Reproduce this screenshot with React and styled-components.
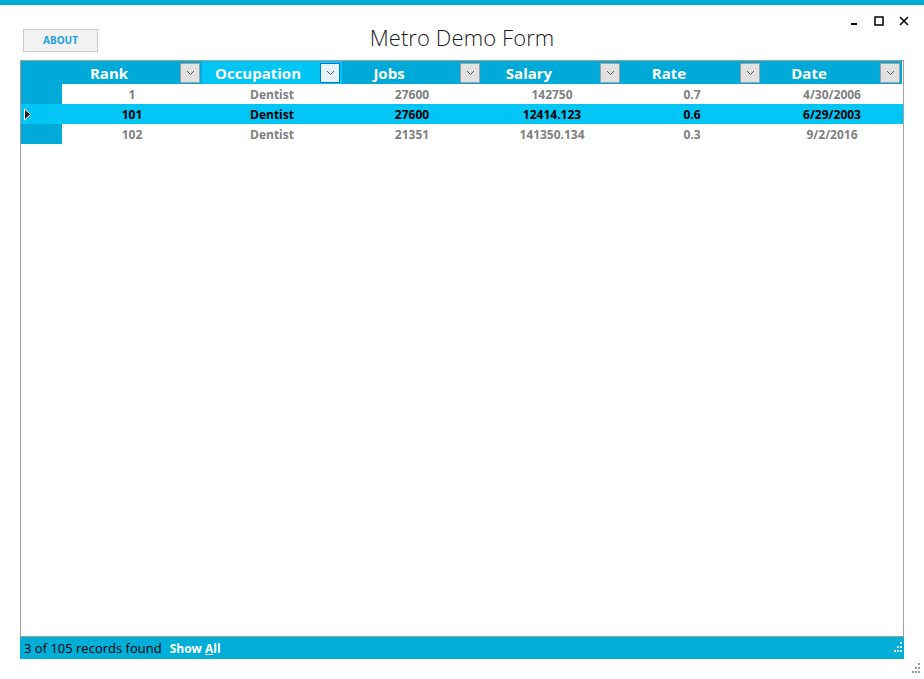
import React from "react";
import styled, { createGlobalStyle } from "styled-components";

const GlobalStyle = createGlobalStyle`
  html, body {
    margin: 0;
    padding: 0;
    background: #ffffff;
  }
  body {
    font-family: "Open Sans", "Noto Sans", sans-serif;
  }
`;

const columns = [
  { key: "rank", label: "Rank" },
  { key: "occupation", label: "Occupation", hover: true },
  { key: "jobs", label: "Jobs" },
  { key: "salary", label: "Salary" },
  { key: "rate", label: "Rate" },
  { key: "date", label: "Date" },
];

const rows = [
  { rank: "1", occupation: "Dentist", jobs: "27600", salary: "142750", rate: "0.7", date: "4/30/2006" },
  { rank: "101", occupation: "Dentist", jobs: "27600", salary: "12414.123", rate: "0.6", date: "6/29/2003", selected: true },
  { rank: "102", occupation: "Dentist", jobs: "21351", salary: "141350.134", rate: "0.3", date: "9/2/2016" },
];

const Page = styled.div`
  width: 924px;
  height: 679px;
  display: flex;
  flex-direction: column;
  overflow: hidden;
`;

const AccentBar = styled.div`
  height: 5px;
  background: #00aad8;
`;

const TitleBar = styled.div`
  height: 55px;
  display: grid;
  grid-template-columns: 1fr auto 1fr;
`;

const LeftSlot = styled.div`
  padding: 22px 0 0 23px;
`;

const AboutButton = styled.button`
  width: 75px;
  height: 23px;
  border: 1px solid #cccccc;
  background: #f2f2f2;
  color: #1ba1e2;
  font-family: "Open Sans", sans-serif;
  font-size: 10px;
  font-weight: 700;
  padding: 0;
  cursor: pointer;
`;

const Title = styled.h1`
  margin: 0;
  padding-top: 17px;
  font-family: "Open Sans", sans-serif;
  font-weight: 300;
  font-size: 22px;
  line-height: 30px;
  letter-spacing: 0.1px;
  color: #1a1a1a;
`;

const Controls = styled.div`
  display: flex;
  justify-content: flex-end;
  align-items: flex-start;
  gap: 9px;
  padding: 9px 12px 0 0;
`;

const ControlButton = styled.button`
  width: 16px;
  height: 14px;
  border: 0;
  padding: 0;
  background: transparent;
  display: flex;
  align-items: center;
  justify-content: center;
`;

const Panel = styled.div`
  margin-left: 20px;
  width: 884px;
  height: 599px;
  display: flex;
  flex-direction: column;
`;

const GridFrame = styled.div`
  flex: 1;
  border: 1px solid #a0a0a0;
  background: #ffffff;
  display: flex;
  flex-direction: column;
`;

const GridRow = styled.div`
  display: grid;
  grid-template-columns: 41px repeat(6, 140px);
  height: ${(p) => (p.$header ? 23 : 20)}px;
  background: ${(p) => (p.$selected ? "#00c5f5" : "transparent")};
`;

const RowHeader = styled.div`
  background: ${(p) => (p.$selected ? "#00c5f5" : "#00aad8")};
  display: flex;
  align-items: center;
  padding-left: 2px;
`;

const HeaderCell = styled.div`
  background: ${(p) => (p.$hover ? "#00c5f5" : "#00aad8")};
  display: grid;
  grid-template-columns: 1fr 20px;
  align-items: center;
  padding-right: 2px;
`;

const HeaderLabel = styled.span`
  color: #ffffff;
  font-size: 15px;
  font-weight: 700;
  text-align: center;
  padding-right: ${(p) => (p.$hover ? 6 : 24)}px;
  white-space: nowrap;
`;

const DropButton = styled.div`
  width: 20px;
  height: 20px;
  box-sizing: border-box;
  border: 1px solid ${(p) => (p.$hover ? "#0078d7" : "#a0a0a0")};
  background: ${(p) => (p.$hover ? "#e5f1fb" : "#e1e1e1")};
  display: flex;
  align-items: center;
  justify-content: center;
`;

const DataCell = styled.div`
  display: flex;
  align-items: center;
  justify-content: center;
  font-size: 12px;
  font-weight: 700;
  color: ${(p) => (p.$selected ? "#000000" : "#808080")};
`;

const StatusBar = styled.div`
  height: 22px;
  background: #00aed8;
  display: flex;
  align-items: center;
  padding-left: 4px;
  padding-right: 1px;
  font-size: 13px;
`;

const StatusText = styled.span`
  color: #000000;
`;

const ShowAll = styled.span`
  margin-left: 8px;
  color: #ffffff;
  font-size: 12px;
  font-weight: 700;
  u {
    text-decoration-thickness: 1px;
  }
`;

const Spacer = styled.div`
  flex: 1;
`;

const Footer = styled.div`
  flex: 1;
  display: flex;
  justify-content: flex-end;
  align-items: flex-end;
  padding: 0 3px 4px 0;
`;

const Chevron = () => (
  <svg width="9" height="6" viewBox="0 0 9 6">
    <path d="M1 1 L4.5 4.5 L8 1" fill="none" stroke="#555" strokeWidth="1" />
  </svg>
);

const RowArrow = () => (
  <svg width="9" height="13" viewBox="0 0 9 13">
    <path d="M1.5 1 L7.5 6.5 L1.5 12 Z" fill="#222" stroke="#fff" strokeWidth="1" />
  </svg>
);

const Grip = ({ color }) => (
  <svg width="12" height="12" viewBox="0 0 12 12">
    {[
      [9, 0],
      [6, 4],
      [9, 4],
      [3, 8],
      [6, 8],
      [9, 8],
    ].map(([x, y], i) => (
      <rect key={i} x={x} y={y} width="2" height="2" fill={color} />
    ))}
  </svg>
);

const App = () => {
  return (
    <Page>
      <GlobalStyle />
      <AccentBar />
      <TitleBar>
        <LeftSlot>
          <AboutButton>ABOUT</AboutButton>
        </LeftSlot>
        <Title>Metro Demo Form</Title>
        <Controls>
          <ControlButton>
            <svg width="8" height="10" viewBox="0 0 8 10">
              <rect x="1" y="7" width="6" height="2" fill="#000" />
            </svg>
          </ControlButton>
          <ControlButton>
            <svg width="10" height="10" viewBox="0 0 10 10">
              <rect x="1" y="1" width="8" height="8" fill="none" stroke="#000" strokeWidth="1.5" />
            </svg>
          </ControlButton>
          <ControlButton>
            <svg width="10" height="10" viewBox="0 0 10 10">
              <path d="M1 1 L9 9 M9 1 L1 9" stroke="#000" strokeWidth="1.6" />
            </svg>
          </ControlButton>
        </Controls>
      </TitleBar>

      <Panel>
        <GridFrame>
          <GridRow $header>
            <RowHeader />
            {columns.map((col) => (
              <HeaderCell key={col.key} $hover={col.hover}>
                <HeaderLabel $hover={col.hover}>{col.label}</HeaderLabel>
                <DropButton $hover={col.hover}>
                  <Chevron />
                </DropButton>
              </HeaderCell>
            ))}
          </GridRow>
          {rows.map((row, i) => (
            <GridRow key={i} $selected={row.selected}>
              <RowHeader $selected={row.selected}>{row.selected && <RowArrow />}</RowHeader>
              {columns.map((col) => (
                <DataCell key={col.key} $selected={row.selected}>
                  {row[col.key]}
                </DataCell>
              ))}
            </GridRow>
          ))}
        </GridFrame>
        <StatusBar>
          <StatusText>3 of 105 records found</StatusText>
          <ShowAll>
            Show <u>A</u>ll
          </ShowAll>
          <Spacer />
          <Grip color="#e6e6e6" />
        </StatusBar>
      </Panel>
      <Footer>
        <Grip color="#9a9a9a" />
      </Footer>
    </Page>
  );
};

export default App;
